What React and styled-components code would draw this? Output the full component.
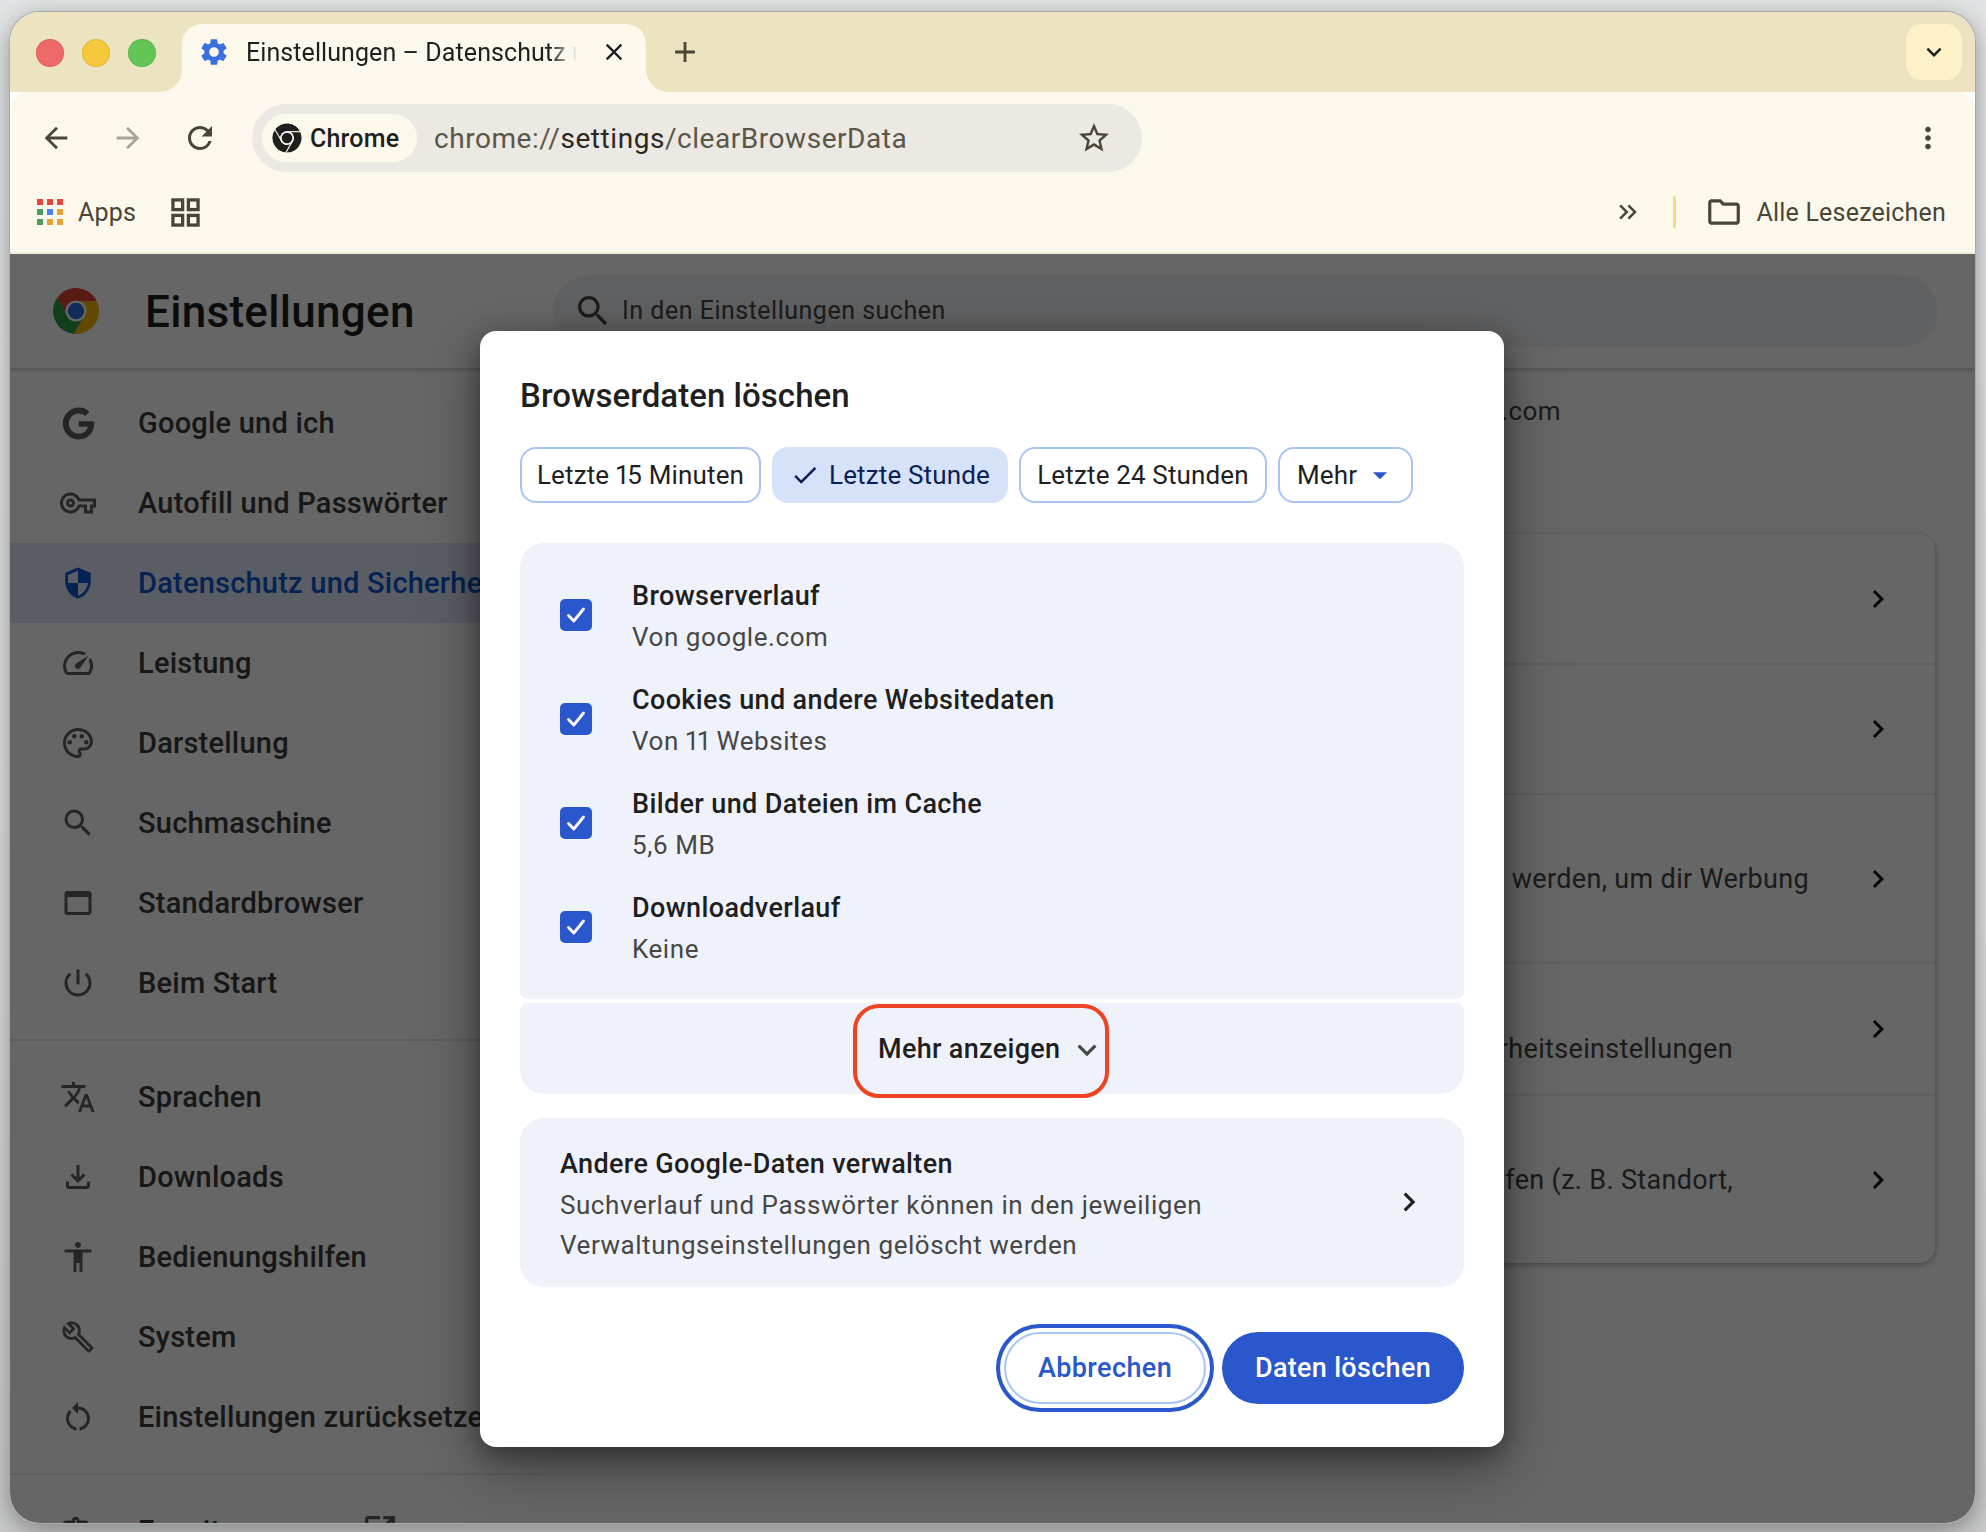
import React from "react";
import styled, { createGlobalStyle } from "styled-components";
import {
  MdArrowBack, MdArrowForward, MdRefresh, MdStarBorder, MdMoreVert, MdClose, MdAdd, MdKeyboardArrowDown,
  MdKeyboardDoubleArrowRight, MdOutlineFolder, MdOutlineVpnKey, MdSecurity, MdOutlineSpeed, MdOutlinePalette,
  MdSearch, MdOutlineWebAsset, MdPowerSettingsNew, MdTranslate, MdOutlineFileDownload, MdAccessibility,
  MdOutlineBuild, MdRestartAlt, MdOutlineExtension, MdOpenInNew, MdSettings, MdChevronRight, MdArrowDropDown, MdCheck,
} from "react-icons/md";
import { FaGoogle } from "react-icons/fa";

const Global = createGlobalStyle`
  html, body { margin: 0; padding: 0; }
  body { width: 1986px; height: 1532px; overflow: hidden; background: #e4e5e6; font-family: Roboto, "Liberation Sans", sans-serif; font-variant-numeric: proportional-nums; }
  * { box-sizing: border-box; }
`;

const Stage = styled.div`
  width: 1986px; height: 1532px; padding: 12px 11px 9px 10px;
  background: linear-gradient(#e2e3e4, #dcdddd 60%, #c8c9c9);
`;
const Window = styled.div`
  width: 100%; height: 100%; border-radius: 30px; overflow: hidden; display: flex; flex-direction: column;
  background: #fff; box-shadow: 0 0 0 1px #a9aaab, 0 6px 24px rgba(0,0,0,.38);
`;
const TabStrip = styled.div`
  height: 80px; flex: none; background: #ece4c0; display: flex; align-items: flex-end; padding: 12px 13px 0 0; position: relative;
`;
const Lights = styled.div`
  display: flex; gap: 18px; width: 172px; padding: 0 0 25px 26px; flex: none; align-self: flex-end;
`;
const Light = styled.span`
  width: 28px; height: 28px; border-radius: 50%; background: ${p => p.$c}; box-shadow: inset 0 0 0 1px rgba(0,0,0,.08);
`;
const Tab = styled.div`
  width: 464px; height: 68px; background: #fdf8ec; border-radius: 20px 20px 0 0; display: flex; align-items: center; padding: 0 0 12px 16px;
  color: #1f1f1f; font-size: 25px; position: relative; flex: none;
  &::before, &::after { content: ""; position: absolute; bottom: 0; width: 22px; height: 22px; }
  &::before { left: -22px; background: radial-gradient(circle at 0 0, #ece4c0 21.5px, #fdf8ec 22px); }
  &::after { right: -22px; background: radial-gradient(circle at 100% 0, #ece4c0 21.5px, #fdf8ec 22px); }
`;
const TabTitle = styled.span`
  width: 338px; margin-left: 16px; white-space: nowrap; overflow: hidden; letter-spacing: .08px;
  -webkit-mask-image: linear-gradient(90deg, #000 90%, transparent 98%);
  mask-image: linear-gradient(90deg, #000 90%, transparent 98%);
`;
const TabClose = styled.span`display: flex; margin-left: 16px; color: #222;`;
const NewTab = styled.span`display: flex; margin: 0 0 12px 22px; color: #4a4536; align-self: flex-end; height: 56px; align-items: center;`;
const Spacer = styled.div`flex: 1;`;
const TabSearch = styled.div`
  width: 56px; height: 56px; border-radius: 16px; background: #fdf1c8; color: #1f1f1f; display: flex; align-items: center; justify-content: center; align-self: flex-start;
`;
const Chrome = styled.div`
  flex: none; background: #fdf8ec; border-radius: 18px 18px 0 0; border-bottom: 2px solid #f1ecd9; position: relative;
`;
const Toolbar = styled.div`height: 92px; display: flex; align-items: center; padding: 0 11px 0 10px;`;
const NavButton = styled.span`
  width: 72px; display: flex; justify-content: center; color: ${p => p.$muted ? "#a9a494" : "#4a4536"};
`;
const Omnibox = styled.div`
  margin-left: 16px; width: 890px; height: 68px; border-radius: 34px; background: #ece8e3; display: flex; align-items: center; padding: 0 30px 0 10px;
`;
const ChipChrome = styled.div`
  width: 155px; height: 48px; border-radius: 24px; background: #fdf8ec; display: flex; align-items: center; padding-left: 10px; gap: 8px;
  font-size: 25px; font-weight: 500; color: #1f1f1f; letter-spacing: .2px;
`;
const Url = styled.div`
  margin-left: 17px; font-size: 28px; letter-spacing: .55px; color: #5a5648; flex: 1; white-space: nowrap;
  b { color: #2a2820; font-weight: 400; }
`;
const Star = styled.span`display: flex; color: #4a4536;`;
const Bookmarks = styled.div`height: 56px; margin-bottom: 12px; display: flex; align-items: center; padding: 0 29px 0 27px; color: #4a4536; font-size: 25px;`;
const AppsLabel = styled.span`margin-left: 15px; letter-spacing: .2px;`;
const GridIcon = styled.svg`margin-left: 35px;`;
const Overflow = styled.span`display: flex; margin-right: 30px;`;
const Sep = styled.span`width: 3px; height: 32px; border-radius: 2px; background: #f6dc80; margin-right: 29px;`;
const FolderWrap = styled.span`display: flex; margin-right: 14px;`;
const AllMarks = styled.span`letter-spacing: .2px;`;

const Content = styled.div`flex: 1; position: relative; overflow: hidden; display: flex; flex-direction: column; background: #fff; min-height: 0;`;
const Header = styled.div`
  height: 114px; flex: none; display: flex; align-items: center; padding-left: 43px; box-shadow: 0 2px 4px rgba(0,0,0,.22); position: relative; z-index: 1;
`;
const PageTitle = styled.h1`margin: 2px 0 0 46px; width: 408px; font-size: 44px; font-weight: 500; color: #1f1f1f; letter-spacing: .3px;`;
const SearchBox = styled.div`
  width: 1385px; height: 72px; margin-top: -1px; border-radius: 36px; background: #f0f2f5; display: flex; align-items: center; padding-left: 20px; gap: 9px; color: #474747; font-size: 25px; letter-spacing: .5px;
`;
const Body = styled.div`flex: 1; display: flex; min-height: 0;`;
const Side = styled.nav`width: 532px; flex: none; padding-top: 15px; overflow: hidden;`;
const Item = styled.div`
  height: 80px; display: flex; align-items: center; padding-left: 50px; gap: 42px; font-size: 29px; font-weight: 500; white-space: nowrap; letter-spacing: .22px;
  color: ${p => p.$active ? "#0b57d0" : "#3a3a3a"}; background: ${p => p.$active ? "#e4e9fb" : "transparent"};
`;
const ItemIcon = styled.span`width: 36px; height: 36px; display: flex; align-items: center; justify-content: center; flex: none; color: ${p => p.$active ? "#0b57d0" : "#5e5e5e"}; `;
const Rule = styled.hr`border: 0; border-top: 2px solid #ececec; margin: 16px 0;`;
const ExtLink = styled.span`display: flex; margin-left: -10px; color: #5e5e5e;`;
const Main = styled.main`flex: 1; padding: 23px 40px 0 0; min-width: 0;`;
const Account = styled.div`height: 40px; text-align: right; padding-right: 374px; line-height: 40px; font-size: 26px; color: #444; letter-spacing: .4px;`;
const Card = styled.section`
  margin-top: 103px; margin-left: 60px; background: #fff; border-radius: 16px; box-shadow: 0 2px 6px rgba(0,0,0,.3);
`;
const CardRow = styled.div`
  height: ${p => p.$h}px; display: flex; align-items: center; justify-content: flex-end; border-top: ${p => p.$first ? "none" : "2px solid #eee"}; padding-right: 39px;
`;
const CardText = styled.div`
  font-size: 27px; color: #444; white-space: nowrap; letter-spacing: .33px; margin-right: ${p => p.$end}px; margin-top: ${p => p.$down || 0}px;
`;
const CardChevron = styled.span`display: flex; color: #111;`;

const Scrim = styled.div`position: absolute; inset: 0; background: rgba(0,0,0,.6); z-index: 2;`;
const Dialog = styled.div`
  position: absolute; left: 470px; top: 77px; width: 1024px; height: 1116px; background: #fff; border-radius: 16px; padding: 45px 40px 44px 40px;
  box-shadow: 0 8px 24px rgba(0,0,0,.35), 0 20px 60px rgba(0,0,0,.35); color: #1f1f1f;
`;
const DialogTitle = styled.h2`margin: 0; font-size: 33px; line-height: 40px; font-weight: 500; letter-spacing: .05px;`;
const Chips = styled.div`display: flex; gap: 11px; margin-top: 31px;`;
const Chip = styled.div`
  height: 56px; width: ${p => p.$w}px; border-radius: 16px; display: flex; align-items: center; justify-content: ${p => p.$left ? "flex-start" : "center"}; padding-left: ${p => p.$left ? "17px" : 0};
  font-size: 26px; font-weight: 400; letter-spacing: .15px; white-space: nowrap;
  border: ${p => p.$on ? "none" : "2px solid #a8c4f5"}; background: ${p => p.$on ? "#d6e2fa" : "#fff"}; color: ${p => p.$on ? "#0a1f56" : "#1f1f1f"};
  svg { flex: none; }
`;
const ChipCheck = styled.span`display: flex; margin-right: 9px;`;
const ChipCaret = styled.span`display: flex; margin-left: 6px; color: #2a57cc;`;
const Panel = styled.div`background: #eff2fa;`;
const ListPanel = styled(Panel)`margin-top: 40px; height: 456px; padding: 20px 0; border-radius: 24px 24px 8px 8px;`;
const Row = styled.div`height: 104px; display: flex; align-items: center; padding-left: 40px; gap: 40px;`;
const Check = styled.span`
  width: 32px; height: 32px; border-radius: 5px; background: #2a57cc; display: flex; align-items: center; justify-content: center; flex: none;
`;
const RowTexts = styled.div`display: flex; flex-direction: column; margin-top: 3px;`;
const RowTitle = styled.div`font-size: 27px; line-height: 41px; font-weight: 500; letter-spacing: .36px;`;
const RowSub = styled.div`font-size: 26px; line-height: 40px; color: #474747; letter-spacing: .55px;`;
const MorePanel = styled(Panel)`
  margin-top: 4px; height: 91px; border-radius: 8px 8px 24px 24px; position: relative; display: flex; align-items: center; padding-left: 358px;
  font-size: 27px; font-weight: 500; letter-spacing: .3px;
`;
const MoreChevron = styled.span`display: flex; color: #474747; margin-left: 8px; margin-top: 3px;`;
const Annotation = styled.span`position: absolute; left: 333px; top: 1px; width: 256px; height: 94px; border: 4px solid #ee4423; border-radius: 26px;`;
const LinkPanel = styled(Panel)`margin-top: 24px; height: 169px; border-radius: 24px; display: flex; align-items: center; justify-content: space-between; padding: 0 36px 0 40px;`;
const LinkTexts = styled.div`display: flex; flex-direction: column; margin-top: 3px;`;
const LinkChevron = styled.span`display: flex; color: #1f1f1f; margin-top: -1px;`;
const Actions = styled.div`display: flex; justify-content: flex-end; gap: 16px; margin-top: 45px;`;
const Cancel = styled.button`
  width: 202px; height: 72px; border-radius: 36px; border: 2px solid #a8c4f5; background: #fff; color: #2a57cc; font: 500 27px Roboto, sans-serif; letter-spacing: .4px;
  box-shadow: 0 0 0 4px #fff, 0 0 0 8px #2a57cc; padding: 0;
`;
const Confirm = styled.button`
  width: 242px; height: 72px; border-radius: 36px; border: 0; background: #2a57cc; color: #fff; font: 500 27px Roboto, sans-serif; letter-spacing: .3px; padding: 0;
`;

const WEDGE = "M24 14 L45.8 14 A24 24 0 0 0 4.44 10.12 L15.34 29 A10 10 0 0 1 24 14 Z";
const ChromeLogo = ({ size, colors, ring, core, gap = 0 }) => (
  <svg width={size} height={size} viewBox="0 0 48 48">
    <path d={WEDGE} fill={colors[0]} stroke={ring} strokeWidth={gap} />
    <path d={WEDGE} fill={colors[1]} stroke={ring} strokeWidth={gap} transform="rotate(120 24 24)" />
    <path d={WEDGE} fill={colors[2]} stroke={ring} strokeWidth={gap} transform="rotate(240 24 24)" />
    <circle cx="24" cy="24" r="11" fill={ring} />
    <circle cx="24" cy="24" r="8.5" fill={core} />
  </svg>
);

const AppsDots = () => {
  const c = ["#e8453c", "#e8453c", "#e8453c", "#4f9d5d", "#4285f4", "#e6a336", "#4f9d5d", "#e6a336", "#e6a336"];
  return (
    <svg width="26" height="26" viewBox="0 0 26 26">
      {c.map((f, i) => <rect key={i} x={(i % 3) * 10} y={Math.floor(i / 3) * 10} width="6" height="6" fill={f} />)}
    </svg>
  );
};

const CheckMark = () => (
  <svg width="24" height="24" viewBox="0 0 24 24" fill="none" stroke="#fff" strokeWidth="2.8" strokeLinecap="round" strokeLinejoin="round">
    <path d="M4.5 12.5 L9.8 18 L19.5 6" />
  </svg>
);

const items1 = [
  [<FaGoogle size={33} />, "Google und ich"],
  [<MdOutlineVpnKey size={38} />, "Autofill und Passwörter"],
  [<MdSecurity size={34} />, "Datenschutz und Sicherheit", true],
  [<MdOutlineSpeed size={36} />, "Leistung"],
  [<MdOutlinePalette size={36} />, "Darstellung"],
  [<MdSearch size={36} />, "Suchmaschine"],
  [<MdOutlineWebAsset size={38} />, "Standardbrowser"],
  [<MdPowerSettingsNew size={36} />, "Beim Start"],
];
const items2 = [
  [<MdTranslate size={38} />, "Sprachen"],
  [<MdOutlineFileDownload size={36} />, "Downloads"],
  [<MdAccessibility size={36} />, "Bedienungshilfen"],
  [<MdOutlineBuild size={34} />, "System"],
  [<MdRestartAlt size={36} />, "Einstellungen zurücksetzen"],
];

const datasets = [
  ["Browserverlauf", "Von google.com"],
  ["Cookies und andere Websitedaten", "Von 11 Websites"],
  ["Bilder und Dateien im Cache", "5,6 MB"],
  ["Downloadverlauf", "Keine"],
];

const Chev = () => <CardChevron><MdChevronRight size={36} /></CardChevron>;
const NavEntry = ({ icon, label, active }) => (
  <Item $active={active}><ItemIcon $active={active}>{icon}</ItemIcon>{label}</Item>
);

export default function App() {
  return (
    <Stage>
      <Global />
      <Window>
        <TabStrip>
          <Lights>
            <Light $c="#ee6a67" /><Light $c="#f5c93b" /><Light $c="#62c554" />
          </Lights>
          <Tab>
            <MdSettings size={32} color="#3a6fe0" />
            <TabTitle>Einstellungen – Datenschutz und Sicherheit</TabTitle>
            <TabClose><MdClose size={28} /></TabClose>
          </Tab>
          <NewTab><MdAdd size={34} /></NewTab>
          <Spacer />
          <TabSearch><MdKeyboardArrowDown size={30} /></TabSearch>
        </TabStrip>
        <Chrome>
          <Toolbar>
            <NavButton><MdArrowBack size={34} /></NavButton>
            <NavButton $muted><MdArrowForward size={34} /></NavButton>
            <NavButton><MdRefresh size={36} /></NavButton>
            <Omnibox>
              <ChipChrome>
                <ChromeLogo size={30} colors={["#1f1f1f", "#1f1f1f", "#1f1f1f"]} ring="#fdf8ec" core="#1f1f1f" gap={1.6} />
                Chrome
              </ChipChrome>
              <Url>chrome://<b>settings</b>/clearBrowserData</Url>
              <Star><MdStarBorder size={36} /></Star>
            </Omnibox>
            <Spacer />
            <NavButton><MdMoreVert size={34} /></NavButton>
          </Toolbar>
          <Bookmarks>
            <AppsDots />
            <AppsLabel>Apps</AppsLabel>
            <GridIcon width="29" height="29" viewBox="0 0 30 30" fill="none" stroke="#4a4536" strokeWidth="3.4">
              <rect x="2" y="2" width="10" height="10" /><rect x="18" y="2" width="10" height="10" />
              <rect x="2" y="18" width="10" height="10" /><rect x="18" y="18" width="10" height="10" />
            </GridIcon>
            <Spacer />
            <Overflow><MdKeyboardDoubleArrowRight size={30} /></Overflow>
            <Sep />
            <FolderWrap><MdOutlineFolder size={38} /></FolderWrap>
            <AllMarks>Alle Lesezeichen</AllMarks>
          </Bookmarks>
        </Chrome>
        <Content>
          <Header>
            <ChromeLogo size={46} colors={["#db4437", "#f4b400", "#2f9e44"]} ring="#fff" core="#2f6fe0" />
            <PageTitle>Einstellungen</PageTitle>
            <SearchBox><MdSearch size={40} />In den Einstellungen suchen</SearchBox>
          </Header>
          <Body>
            <Side>
              {items1.map(([icon, label, active]) => <NavEntry key={label} icon={icon} label={label} active={active} />)}
              <Rule />
              {items2.map(([icon, label]) => <NavEntry key={label} icon={icon} label={label} />)}
              <Rule />
              <Item>
                <ItemIcon><MdOutlineExtension size={36} /></ItemIcon>
                Erweiterungen
                <ExtLink><MdOpenInNew size={40} /></ExtLink>
              </Item>
            </Side>
            <Main>
              <Account>nutzer@gmail.com</Account>
              <Card>
                <CardRow $h={129} $first><Chev /></CardRow>
                <CardRow $h={130}><Chev /></CardRow>
                <CardRow $h={169}><CardText $end={51}>werden, um dir Werbung</CardText><Chev /></CardRow>
                <CardRow $h={132}><CardText $end={127} $down={40}>und andere Sicherheitseinstellungen</CardText><Chev /></CardRow>
                <CardRow $h={169}><CardText $end={127}>anzeigen dürfen (z. B. Standort,</CardText><Chev /></CardRow>
              </Card>
            </Main>
          </Body>
          <Scrim>
            <Dialog>
              <DialogTitle>Browserdaten löschen</DialogTitle>
              <Chips>
                <Chip $w={241}>Letzte 15 Minuten</Chip>
                <Chip $w={236} $on><ChipCheck><MdCheck size={30} /></ChipCheck>Letzte Stunde</Chip>
                <Chip $w={248}>Letzte 24 Stunden</Chip>
                <Chip $w={135} $left>Mehr<ChipCaret><MdArrowDropDown size={34} /></ChipCaret></Chip>
              </Chips>
              <ListPanel>
                {datasets.map(([t, s]) => (
                  <Row key={t}>
                    <Check><CheckMark /></Check>
                    <RowTexts><RowTitle>{t}</RowTitle><RowSub>{s}</RowSub></RowTexts>
                  </Row>
                ))}
              </ListPanel>
              <MorePanel>
                Mehr anzeigen
                <MoreChevron><MdKeyboardArrowDown size={38} /></MoreChevron>
                <Annotation />
              </MorePanel>
              <LinkPanel>
                <LinkTexts>
                  <RowTitle>Andere Google-Daten verwalten</RowTitle>
                  <RowSub>Suchverlauf und Passwörter können in den jeweiligen</RowSub>
                  <RowSub>Verwaltungseinstellungen gelöscht werden</RowSub>
                </LinkTexts>
                <LinkChevron><MdChevronRight size={38} /></LinkChevron>
              </LinkPanel>
              <Actions>
                <Cancel>Abbrechen</Cancel>
                <Confirm>Daten löschen</Confirm>
              </Actions>
            </Dialog>
          </Scrim>
        </Content>
      </Window>
    </Stage>
  );
}
